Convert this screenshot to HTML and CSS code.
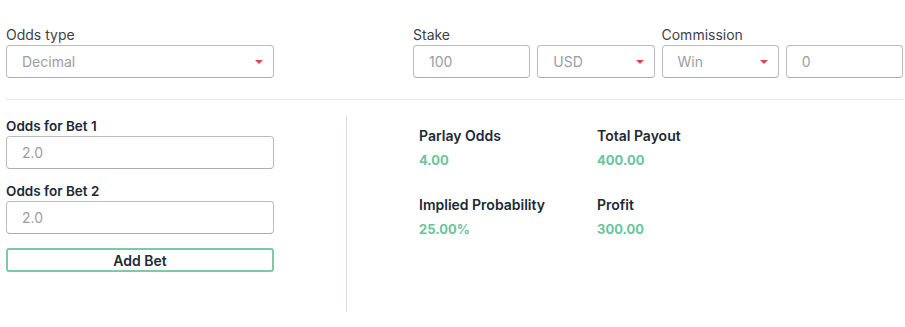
FILE: index.html
```html
<!DOCTYPE html>
<html>
<head>
<meta charset="utf-8">
<link rel="stylesheet" href="styles.css">
</head>
<body>
<div class="calc">
  <div class="top">
    <div class="field odds-type">
      <div class="lbl">Odds type</div>
      <div class="box select"><span>Decimal</span><i class="caret"></i></div>
    </div>
    <div class="right-top">
      <div class="lbl">Stake</div>
      <div class="lbl">&nbsp;</div>
      <div class="lbl">Commission</div>
      <div class="lbl">&nbsp;</div>
      <div class="box"><span>100</span></div>
      <div class="box select"><span>USD</span><i class="caret"></i></div>
      <div class="box select"><span>Win</span><i class="caret"></i></div>
      <div class="box"><span>0</span></div>
    </div>
  </div>
  <hr class="divider">
  <div class="bottom">
    <div class="bets">
      <div class="blbl">Odds for Bet 1</div>
      <div class="box"><span>2.0</span></div>
      <div class="blbl second">Odds for Bet 2</div>
      <div class="box"><span>2.0</span></div>
      <button class="add">Add Bet</button>
    </div>
    <div class="results">
      <div class="res">
        <div class="rlbl">Parlay Odds</div>
        <div class="rval">4.00</div>
      </div>
      <div class="res">
        <div class="rlbl">Total Payout</div>
        <div class="rval">400.00</div>
      </div>
      <div class="res">
        <div class="rlbl">Implied Probability</div>
        <div class="rval">25.00%</div>
      </div>
      <div class="res">
        <div class="rlbl">Profit</div>
        <div class="rval">300.00</div>
      </div>
    </div>
  </div>
</div>
</body>
</html>
```

FILE: styles.css
```css
* { box-sizing: border-box; }
html, body { margin: 0; padding: 0; background: #ffffff; }
body {
  font-family: Inter, "Open Sans", "Liberation Sans", sans-serif;
  color: #3b3f44;
}
.calc { padding: 25px 2px 0 6px; }
.top { display: flex; }
.odds-type { width: 268px; }
.right-top {
  margin-left: 139px;
  width: 490px;
  display: grid;
  grid-template-columns: repeat(4, 1fr);
  column-gap: 7px;
}
.lbl {
  font-size: 14px;
  line-height: 20px;
  height: 20px;
  color: #3d4247;
  white-space: nowrap;
}
.box {
  height: 33px;
  border: 1px solid #b9bdc2;
  border-bottom-color: #a9aeb4;
  border-radius: 4px;
  display: flex;
  align-items: center;
  padding-left: 15px;
  padding-right: 10px;
  font-size: 14px;
  color: #9a9ea3;
  background: #fff;
}
.box span { flex: 1; }
.caret {
  width: 0; height: 0;
  border-left: 4px solid transparent;
  border-right: 4px solid transparent;
  border-top: 4px solid #e0434b;
  margin-top: 1px;
}
.divider {
  border: 0;
  border-top: 1px solid #e6eaee;
  margin: 21px 0 0 0;
  height: 0;
}
.bottom {
  display: flex;
  padding-top: 16px;
}
.bets {
  width: 268px;
  padding-bottom: 40px;
  margin-right: 72px;
}
.blbl {
  font-size: 13.5px;
  font-weight: 600;
  line-height: 20px;
  color: #1c2a38;
}
.blbl.second { margin-top: 12px; }
.add {
  display: block;
  width: 100%;
  height: 24px;
  margin-top: 14px;
  border: 2px solid #7cc8a8;
  border-radius: 3px;
  background: #fff;
  font-family: inherit;
  font-size: 14px;
  font-weight: 600;
  color: #1c2a38;
  padding: 0;
}
.results {
  border-left: 1px solid #d6e0ea;
  padding-left: 72px;
  padding-top: 10px;
  display: grid;
  grid-template-columns: 178px 200px;
  row-gap: 25px;
  align-content: start;
}
.rlbl {
  font-size: 14px;
  font-weight: 600;
  line-height: 20px;
  color: #1c2a38;
}
.rval {
  margin-top: 4px;
  font-size: 13px;
  font-weight: 700;
  line-height: 20px;
  color: #6cc29e;
}
```
